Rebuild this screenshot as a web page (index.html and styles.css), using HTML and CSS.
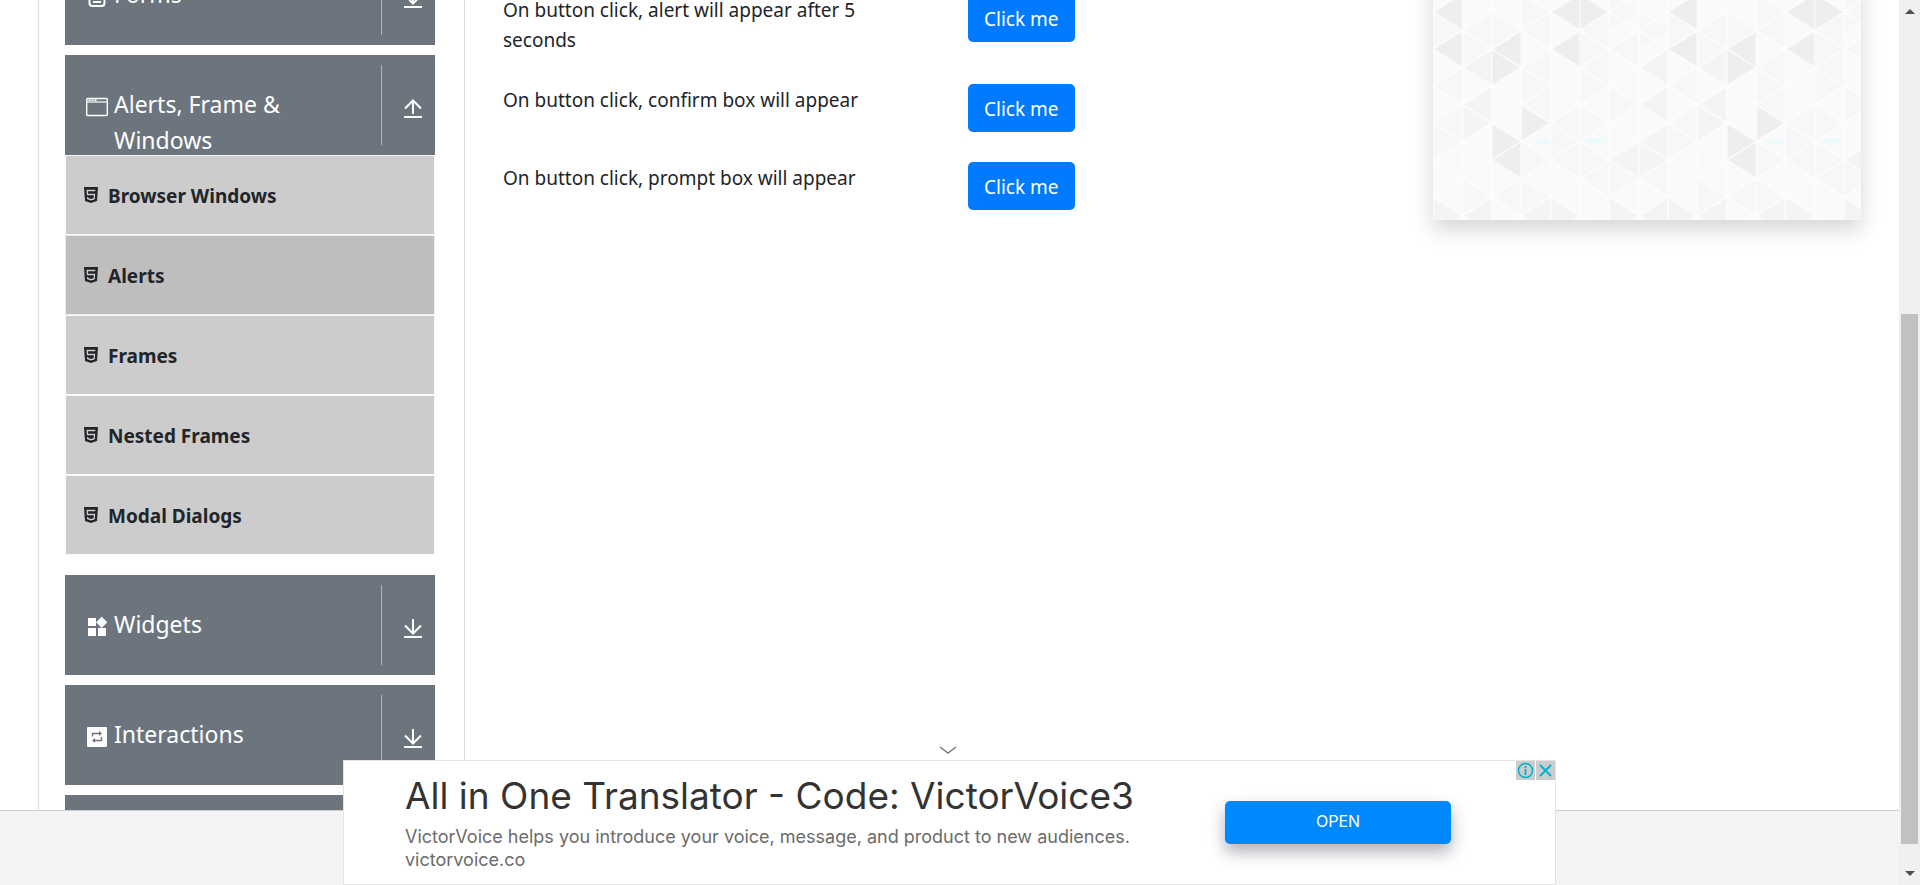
FILE: index.html
```html
<!DOCTYPE html>
<html lang="en">
<head>
<meta charset="utf-8">
<title>Alerts</title>
<link rel="stylesheet" href="styles.css">
</head>
<body>
<svg class="defs" aria-hidden="true">
  <defs>
    <symbol id="down" viewBox="0 0 24 24"><path d="M12 3v14M4 9.500l8 8 8-8M3 21h18" fill="none" stroke="#fff" stroke-width="2"/></symbol>
    <symbol id="up" viewBox="0 0 24 24"><path d="M12 18V4.500M4 12.500l8-8 8 8M3 21h18" fill="none" stroke="#fff" stroke-width="2"/></symbol>
    <symbol id="html5" viewBox="0 0 14 16"><path d="M0 0h14l-1 14-6 2-6-2z" fill="#212529"/><path d="M11.300 3.500H3.200l.3 4H10.500l-.3 4.200-3.200 1-3.200-1-.1-1.700" fill="none" stroke="#ccc" stroke-width="1.300"/></symbol>
  </defs>
</svg>
<div class="window">
  <div class="page">
    <main class="main">
      <nav class="sidebar">
        <section class="group">
          <button class="head"><svg class="icon" viewBox="0 0 24 24"><rect x="4.500" y="1" width="15" height="21" rx="3" fill="none" stroke="#fff" stroke-width="2"/><path d="M8 8h8M8 13h8M8 18h8" stroke="#fff" stroke-width="2"/></svg><span class="label">Forms</span><span class="toggle"><svg><use href="#down"/></svg></span></button>
        </section>
        <section class="group">
          <button class="head"><svg class="icon" viewBox="0 0 24 24"><rect x="1.700" y="4.500" width="20.600" height="17" rx="1" fill="none" stroke="#fff" stroke-width="1.400"/><path d="M2 8h20" stroke="#fff" stroke-width="1.200"/><path d="M3.500 6.200h8" stroke="#fff" stroke-width="1.800" stroke-dasharray="2 1"/></svg><span class="label">Alerts, Frame &amp; Windows</span><span class="toggle"><svg><use href="#up"/></svg></span></button>
          <ul class="list">
            <li><a href="#"><svg><use href="#html5"/></svg>Browser Windows</a></li>
            <li class="active"><a href="#"><svg><use href="#html5"/></svg>Alerts</a></li>
            <li><a href="#"><svg><use href="#html5"/></svg>Frames</a></li>
            <li><a href="#"><svg><use href="#html5"/></svg>Nested Frames</a></li>
            <li><a href="#"><svg><use href="#html5"/></svg>Modal Dialogs</a></li>
          </ul>
        </section>
        <section class="group">
          <button class="head"><svg class="icon" viewBox="0 0 24 24"><path d="M3 4h8v8H3zM3 14h8v8H3zM13 14h8v8h-8zM16.700 2.700l5.600 5.600-5.600 5.600-5.600-5.600z" fill="#fff"/></svg><span class="label">Widgets</span><span class="toggle"><svg><use href="#down"/></svg></span></button>
        </section>
        <section class="group">
          <button class="head"><svg class="icon" viewBox="0 0 24 24"><rect x="2" y="3" width="20" height="20" rx="1" fill="#fff"/><path d="M7.500 12.500V9.500H15M16.500 13v3.500H9" fill="none" stroke="#6c757d" stroke-width="1.400"/><path d="M14 7l3 2.500-3 2.500zM10 14l-3 2.500 3 2.500z" fill="#6c757d"/></svg><span class="label">Interactions</span><span class="toggle"><svg><use href="#down"/></svg></span></button>
        </section>
        <section class="group">
          <button class="head" aria-label="More"></button>
        </section>
      </nav>
      <div class="content">
        <div class="row"><span class="text">On button click, alert will appear after 5 seconds</span><div><button class="btn">Click me</button></div></div>
        <div class="row"><span class="text">On button click, confirm box will appear</span><div><button class="btn">Click me</button></div></div>
        <div class="row"><span class="text">On button click, prompt box will appear</span><div><button class="btn">Click me</button></div></div>
      </div>
      <aside class="side">
        <svg class="pattern" aria-hidden="true">
          <defs>
            <path id="l" d="M29.400-18.500L0 0l29.400 18.500z"/>
            <path id="r" d="M0-18.500L29.400 0 0 18.500z"/>
            <filter id="soft"><feGaussianBlur stdDeviation="3 1"/></filter>
            <pattern id="mesh" width="58.750" height="37" patternUnits="userSpaceOnUse" y="72">
              <path d="M0 0L58.750 37M0 37L58.750 0M0-1v39M29.400-1v39M58.750-1v39" fill="none" stroke="#fefefe" stroke-width="1.600" stroke-opacity=".8"/>
            </pattern>
            <pattern id="tile" width="235" height="222" patternUnits="userSpaceOnUse" y="60">
              <rect width="235" height="222" fill="#fafafa"/>
              <g fill="#f7f7f7">
                <use href="#r" x="0" y="30"/><use href="#l" x="29.400" y="30"/><use href="#r" x="58.800" y="30"/><use href="#r" x="88" y="12"/><use href="#l" x="88" y="30"/><use href="#l" x="147" y="30"/><use href="#r" x="176" y="12"/><use href="#r" x="206" y="30"/><use href="#l" x="176" y="49"/><use href="#r" x="147" y="49"/><use href="#l" x="88" y="67"/><use href="#r" x="29.400" y="49"/><use href="#r" x="88" y="86"/><use href="#l" x="147" y="67"/><use href="#r" x="147" y="86"/><use href="#l" x="0" y="86"/><use href="#r" x="176" y="104"/><use href="#l" x="88" y="104"/><use href="#l" x="0" y="123"/><use href="#r" x="0" y="141"/><use href="#l" x="118" y="123"/><use href="#r" x="118" y="141"/><use href="#r" x="147" y="123"/><use href="#r" x="88" y="160"/><use href="#l" x="147" y="178"/><use href="#r" x="176" y="178"/><use href="#r" x="88" y="197"/><use href="#l" x="118" y="160"/><use href="#r" x="29.400" y="197"/><use href="#l" x="59" y="197"/><use href="#r" x="147" y="160"/><use href="#l" x="206" y="178"/>
              </g>
              <g fill="#f4f4f4">
                <use href="#l" x="29.400" y="67.800"/><use href="#l" x="206" y="67.800"/><use href="#l" x="29.400" y="105"/><use href="#l" x="206" y="105"/><use href="#r" x="29.400" y="123"/><use href="#l" x="206" y="142"/><use href="#l" x="176" y="160"/><use href="#r" x="206" y="160"/><use href="#r" x="0" y="216"/><use href="#l" x="29.400" y="216"/><use href="#l" x="88" y="216"/><use href="#r" x="118" y="216"/><use href="#r" x="176" y="216"/><use href="#l" x="206" y="216"/>
              </g>
              <g fill="#eee">
                <use href="#l" x="0" y="12.300"/><use href="#l" x="118" y="12.300"/><use href="#r" x="147" y="12.300"/><use href="#l" x="0" y="49.300"/><use href="#l" x="59" y="49.300"/><use href="#r" x="59" y="67.800"/><use href="#l" x="118" y="49.300"/><use href="#r" x="88" y="123.300"/><use href="#r" x="59" y="141.800"/><use href="#l" x="59" y="160.300"/>
              </g>
              <g fill="#dcfcff" filter="url(#soft)"><path d="M98 142l18-2v4z"/><path d="M150 141l12-2 12 2-12 2z"/></g>
            </pattern>
          </defs>
          <rect width="100%" height="100%" fill="url(#tile)"/>
          <rect width="100%" height="100%" fill="url(#mesh)"/>
        </svg>
      </aside>
    </main>
    <footer class="footer"></footer>
    <aside class="banner">
      <svg class="collapse" viewBox="0 0 18 9"><path d="M1 1l8 6 8-6" fill="none" stroke="#777" stroke-width="1.400"/></svg>
      <div class="copy">
        <h2>All in One Translator - Code: VictorVoice3</h2>
        <p>VictorVoice helps you introduce your voice, message, and product to new audiences.</p>
        <p>victorvoice.co</p>
      </div>
      <button class="open">OPEN</button>
      <div class="choices">
        <svg viewBox="0 0 19 19"><path d="M0 0h19v19H0z" fill="#ccc"/><circle cx="9.500" cy="9.500" r="7" fill="none" stroke="#00aecd" stroke-width="1.500"/><path d="M9.500 5v2M9.500 8v6" stroke="#00aecd" stroke-width="1.800"/></svg>
        <svg viewBox="0 0 19 19"><path d="M0 0h19v19H0z" fill="#ccc"/><path d="M4 4l11 11M15 4L4 15" stroke="#00aecd" stroke-width="1.800"/></svg>
      </div>
    </aside>
  </div>
  <div class="scrollbar">
    <svg viewBox="0 0 10 5"><path d="M0 5l5-5 5 5z" fill="#505050"/></svg>
    <div class="track"><div class="thumb"></div></div>
    <svg viewBox="0 0 10 5"><path d="M0 0l5 5 5-5z" fill="#505050"/></svg>
  </div>
</div>
</body>
</html>
```
FILE: styles.css
```css
* { box-sizing: border-box; }
body {
  margin: 0;
  font: 19px/30px "Noto Sans", "Open Sans", sans-serif;
  color: #212529;
  background: #fff;
}
button { font: inherit; border: 0; cursor: pointer; }
.defs { position: absolute; width: 0; height: 0; }
.window { display: flex; height: 100vh; overflow: hidden; }
.page { position: relative; flex: 1; display: flex; flex-direction: column; min-width: 0; }
.main {
  flex: 1;
  min-height: 0;
  overflow: hidden;
  display: grid;
  grid-template-columns: 427fr 930fr 466fr;
  padding: 0 38px;
}
.footer { height: 75px; flex: none; background: #f4f4f4; border-top: 1px solid #ccc; }

.sidebar {
  border: solid #dcdcdc;
  border-width: 0 1px;
  padding: 0 29px 0 26px;
  margin-top: -55px;
}
.group { margin-bottom: 10px; }
.head {
  display: flex;
  width: 100%;
  height: 100px;
  padding: 10px 0 10px 20px;
  color: #fff;
  background: #6c757d;
  font-size: 23px;
  line-height: 36px;
  text-align: left;
}
.icon { flex: none; width: 24px; height: 24px; margin: 29px 5px 0 0; }
.label { flex: 1; margin-top: 21px; padding-right: 60px; }
.toggle {
  width: 54px;
  height: 80px;
  padding: 31px 0 0 19px;
  border-left: 1px solid #b0b4b8;
}
.toggle svg { display: block; width: 24px; height: 24px; }
.list { list-style: none; margin: 0 0 20px; padding: 0; }
.list li { height: 80px; border: 1px solid #f8f8f8; background: #ccc; }
.list .active { background: #bebebe; border-color: #ececec; }
.list a {
  display: flex;
  gap: 10px;
  height: 100%;
  padding: 25px 0 0 18px;
  color: #212529;
  font-weight: 700;
  text-decoration: none;
}
.list svg { width: 14px; height: 16px; margin-top: 6px; }

.content { display: flex; flex-direction: column; gap: 30px; padding-left: 38px; margin-top: -6px; }
.row { display: grid; grid-template-columns: 1fr 1fr; column-gap: 38px; align-items: start; min-height: 48px; }
.text { padding-right: 40px; margin: 1px 0 -1px; }
.btn {
  display: block;
  height: 48px;
  padding: 2px 16px 0;
  color: #fff;
  background: #007bff;
  border-radius: 5px;
}
.side { padding-left: 38px; margin-top: -60px; }
.pattern { display: block; width: 100%; height: 280px; background: #fbfbfb; box-shadow: 0 10px 20px rgba(0, 0, 0, .16); }

.banner {
  position: absolute;
  bottom: 0;
  left: 0;
  right: 0;
  margin: 0 343px;
  display: flex;
  justify-content: space-between;
  height: 125px;
  padding: 0 104px 0 61px;
  border: 1px solid #e3e3e3;
  background: #fff;
  font-family: Inter, sans-serif;
  color: #6b6b6b;
}
.copy h2 { margin: 15px 0 9px; font-size: 37px; line-height: 40px; font-weight: 400; color: #333; }
.copy p { margin: 0; font-size: 18px; line-height: 23px; }
.open {
  width: 226px;
  height: 43px;
  margin-top: 40px;
  padding-bottom: 4px;
  border-radius: 5px;
  color: #fff;
  background: #0088ff;
  font-size: 16px;
  line-height: 36px;
  box-shadow: 0 8px 16px rgba(30, 30, 60, .35);
}
.collapse { position: absolute; top: -15px; left: 50%; width: 18px; height: 9px; margin-left: -11px; }
.choices { position: absolute; top: 0; right: 0; display: flex; gap: 1px; }
.choices svg { width: 19px; height: 19px; }

.scrollbar {
  flex: none;
  width: 21px;
  padding: 9px 0;
  display: flex;
  flex-direction: column;
  align-items: center;
  background: #f0f0f0;
}
.scrollbar svg { width: 10px; height: 5px; }
.track { flex: 1; width: 17px; padding: 300px 0 27px; }
.thumb { height: 100%; background: #c1c1c1; }
```
